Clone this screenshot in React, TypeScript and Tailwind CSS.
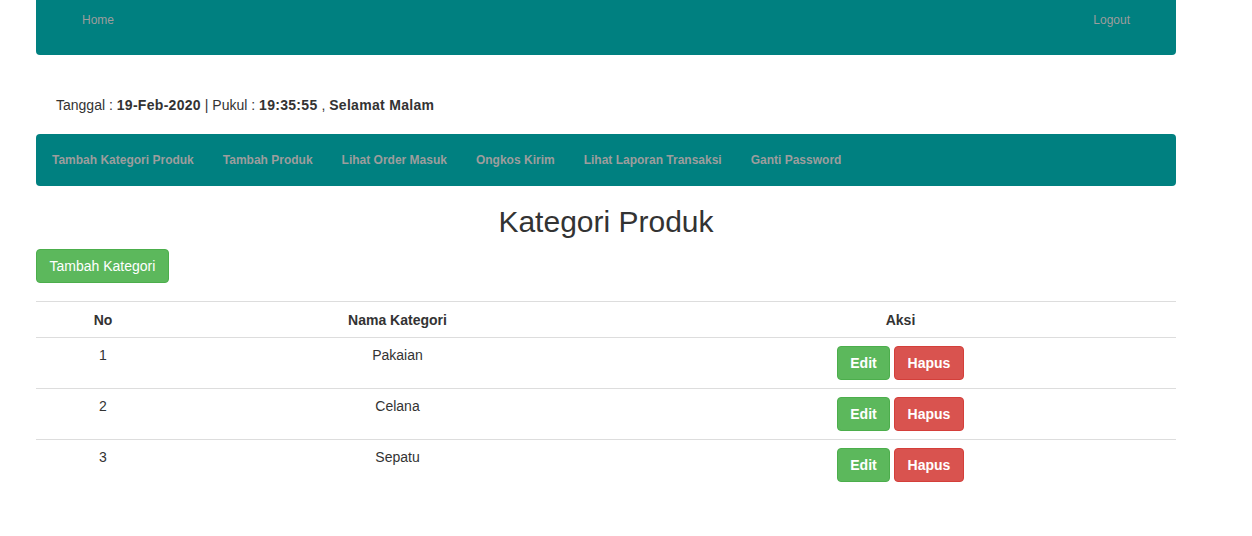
import React from 'react';

const menu = [
  'Tambah Kategori Produk',
  'Tambah Produk',
  'Lihat Order Masuk',
  'Ongkos Kirim',
  'Lihat Laporan Transaksi',
  'Ganti Password',
];

const rows = [
  { no: 1, nama: 'Pakaian' },
  { no: 2, nama: 'Celana' },
  { no: 3, nama: 'Sepatu' },
];

export default function App() {
  return (
    <div className="min-h-[536px] bg-white text-[#333] text-sm" style={{ fontFamily: '"Liberation Sans", Arial, sans-serif' }}>
      <div className="w-[1140px] ml-[36px]">
        {/* top navbar */}
        <div className="h-[55px] bg-[#008080] rounded-b flex justify-between items-start px-[46px] pt-[12px] text-xs text-[#9d9d9d]">
          <span>Home</span>
          <span>Logout</span>
        </div>

        <div className="mt-[40px] pl-[20px] leading-5">
          Tanggal : <b className="tracking-[0.3px]">19-Feb-2020</b> | Pukul : <b className="tracking-[0.3px]">19:35:55</b> ,{' '}
          <b className="tracking-[0.3px]">Selamat Malam</b>
        </div>

        {/* menu */}
        <div className="mt-[19px] h-[52px] bg-[#008080] rounded flex items-center pl-[16px] gap-[29px] text-xs font-bold text-[#9d9d9d]">
          {menu.map((m) => (
            <span key={m}>{m}</span>
          ))}
        </div>

        <h2 className="mt-[18px] text-center text-[30px] leading-[36px]">Kategori Produk</h2>

        <button className="mt-[9px] h-[34px] px-[12.5px] bg-[#5cb85c] border border-[#4cae4c] rounded text-white text-sm">
          Tambah Kategori
        </button>

        <table className="mt-[18px] w-full border-collapse">
          <thead>
            <tr className="border-t border-[#ddd]">
              <th className="w-[134px] px-2 pt-2 pb-[7px] leading-5 font-bold text-center">No</th>
              <th className="w-[455px] px-2 pt-2 pb-[7px] leading-5 font-bold text-center">Nama Kategori</th>
              <th className="px-2 pt-2 pb-[7px] leading-5 font-bold text-center">Aksi</th>
            </tr>
          </thead>
          <tbody>
            {rows.map((r) => (
              <tr key={r.no} className="border-t border-[#ddd]">
                <td className="px-2 pt-[7px] pb-2 leading-5 text-center align-top">{r.no}</td>
                <td className="px-2 pt-[7px] pb-2 leading-5 text-center align-top">{r.nama}</td>
                <td className="p-2 text-center align-top">
                  <div className="flex justify-center gap-[4px]">
                    <span className="h-[34px] w-[53px] flex items-center justify-center bg-[#5cb85c] border border-[#4cae4c] rounded text-white font-bold">
                      Edit
                    </span>
                    <span className="h-[34px] w-[70px] flex items-center justify-center bg-[#d9534f] border border-[#d43f3a] rounded text-white font-bold">
                      Hapus
                    </span>
                  </div>
                </td>
              </tr>
            ))}
          </tbody>
        </table>
      </div>
    </div>
  );
}
